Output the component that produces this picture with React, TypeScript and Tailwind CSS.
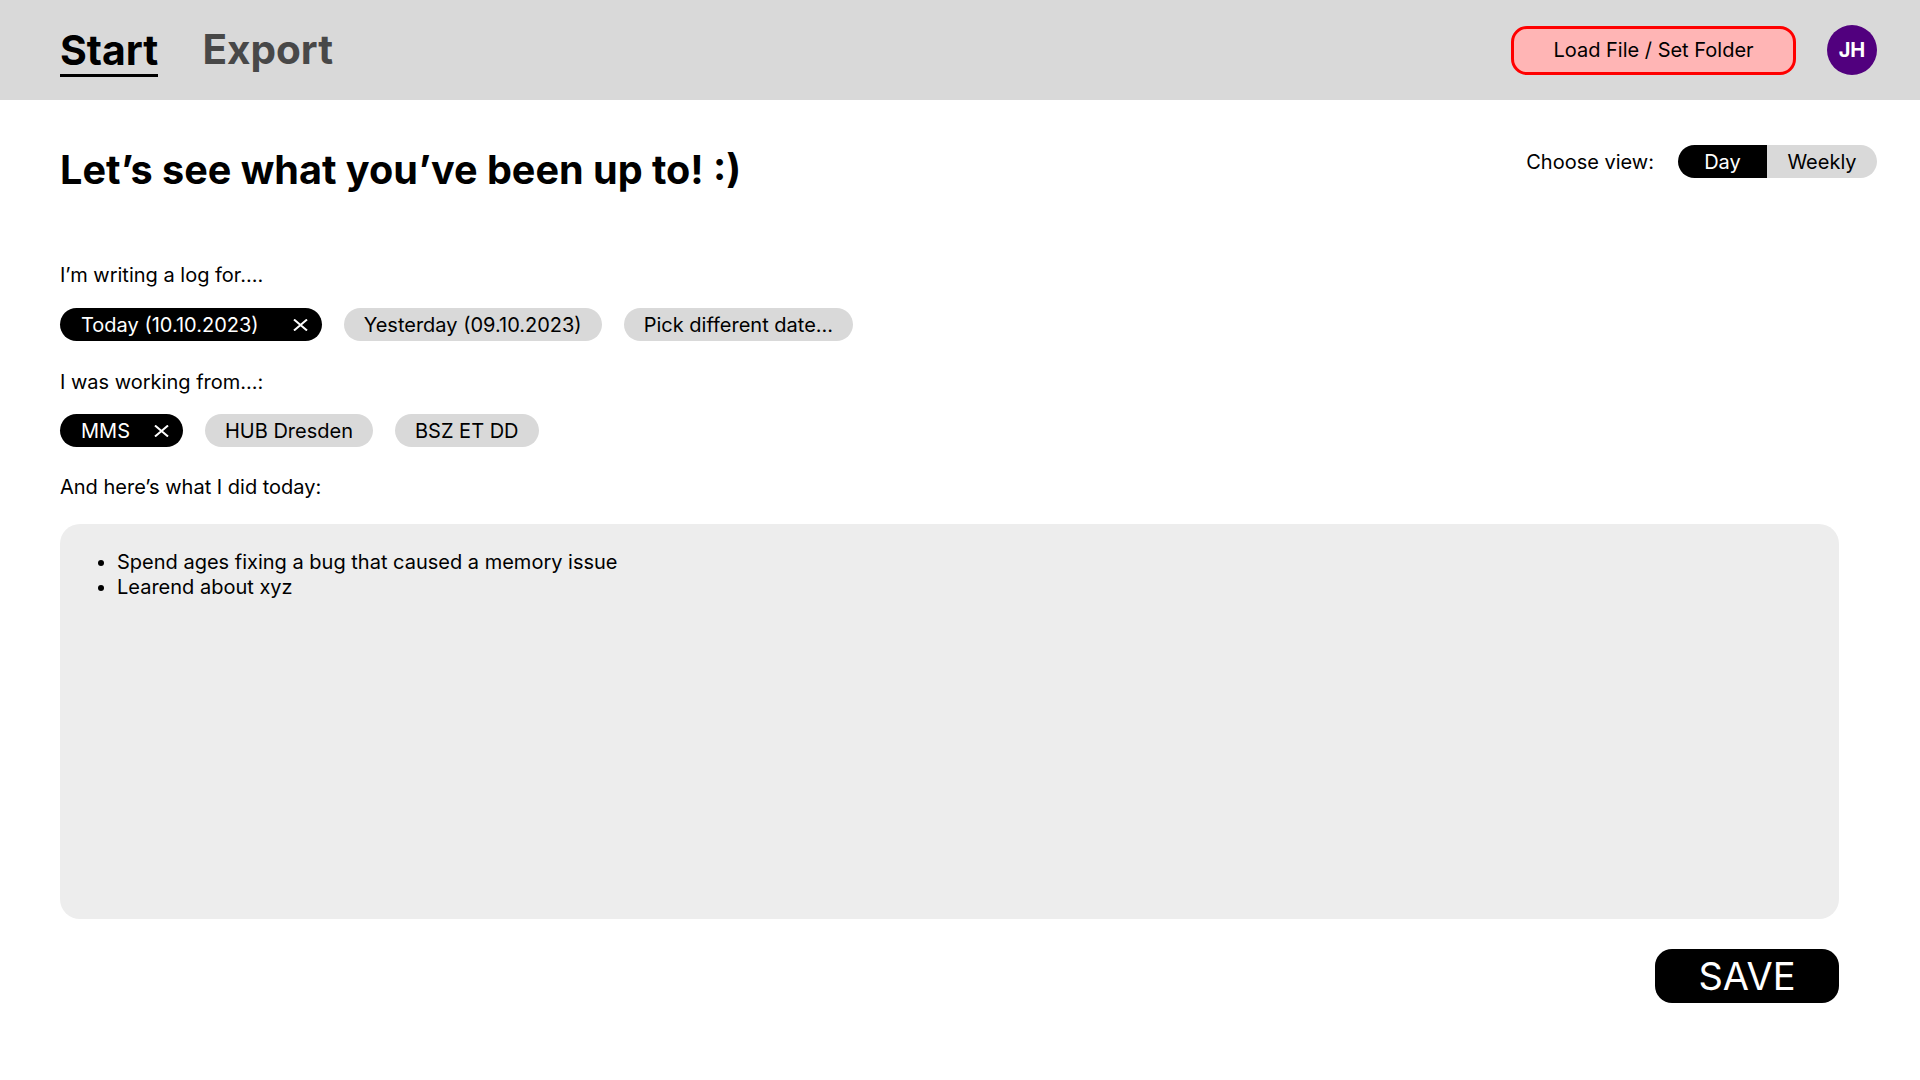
import { useState } from 'react';

// Small thin "x" used inside the selected chips
function CloseMark({ className = '' }: { className?: string }) {
  return (
    <svg width="15" height="12" viewBox="0 0 15 12" className={className} aria-hidden="true">
      <path d="M1 0.5 L14 11.5 M14 0.5 L1 11.5" stroke="currentColor" strokeWidth="2" fill="none" />
    </svg>
  );
}

type ChipProps = {
  label: string;
  selected?: boolean;
  gapClass?: string;
};

function Chip({ label, selected = false, gapClass = 'ml-[35px]' }: ChipProps) {
  if (selected) {
    return (
      <button className="flex h-[33px] items-center rounded-full bg-black pl-[21px] pr-[14px] text-[20px] leading-[24px] text-white">
        <span>{label}</span>
        <CloseMark className={gapClass} />
      </button>
    );
  }
  return (
    <button className="flex h-[33px] items-center rounded-full bg-[#d9d9d9] px-[20px] text-[20px] leading-[24px] text-black">
      {label}
    </button>
  );
}

export default function App() {
  const [view, setView] = useState<'day' | 'weekly'>('day');

  return (
    <div className="min-h-screen bg-white font-['Inter',sans-serif] text-black">
      {/* Top bar */}
      <header className="flex h-[100px] items-center justify-between bg-[#d9d9d9] pl-[60px] pr-[43px]">
        <nav className="flex gap-[44px] self-start pt-[31px]">
          <div className="flex flex-col">
            <span className="text-[41px] font-bold leading-[38px]">Start</span>
            <div className="mt-[5px] h-[3px] bg-black" />
          </div>
          <span className="text-[40.5px] font-bold leading-[38px] text-[#484848]">Export</span>
        </nav>

        <div className="flex items-center gap-[31px]">
          <button className="flex h-[49px] w-[285px] items-center justify-center rounded-[16px] border-[3px] border-[#ff0000] bg-[#ffb5b5] text-[20px] text-black">
            Load File / Set Folder
          </button>
          <div className="flex h-[50px] w-[50px] items-center justify-center rounded-full bg-[#51007e] text-[20px] font-bold text-white">
            JH
          </div>
        </div>
      </header>

      <main className="pl-[60px] pr-[43px]">
        {/* Heading + view switch */}
        <div className="mt-[45px] flex items-start justify-between">
          <h1 className="mt-[2px] text-[39.6px] font-bold leading-[46px]">Let’s see what you’ve been up to! :)</h1>
          <div className="flex h-[33px] items-center gap-[24px]">
            <span className="text-[20px]">Choose view:</span>
            <div className="flex h-[33px] overflow-hidden rounded-full text-[20px]">
              <button
                onClick={() => setView('day')}
                className={
                  view === 'day'
                    ? 'w-[89px] bg-black text-white'
                    : 'w-[89px] bg-[#d9d9d9] text-black'
                }
              >
                Day
              </button>
              <button
                onClick={() => setView('weekly')}
                className={
                  view === 'weekly'
                    ? 'w-[110px] bg-black text-white'
                    : 'w-[110px] bg-[#d9d9d9] text-black'
                }
              >
                Weekly
              </button>
            </div>
          </div>
        </div>

        <p className="mt-[70px] text-[20px] leading-[24px]">I’m writing a log for....</p>
        <div className="mt-[21px] flex gap-[22px]">
          <Chip label="Today (10.10.2023)" selected gapClass="ml-[34px]" />
          <Chip label="Yesterday (09.10.2023)" />
          <Chip label="Pick different date..." />
        </div>

        <p className="mt-[29px] text-[20px] leading-[24px]">I was working from...:</p>
        <div className="mt-[20px] flex gap-[22px]">
          <Chip label="MMS" selected gapClass="ml-[24px]" />
          <Chip label="HUB Dresden" />
          <Chip label="BSZ ET DD" />
        </div>

        <p className="mt-[28px] text-[20px] leading-[24px]">And here’s what I did today:</p>

        <div className="mr-[38px]">
          <div className="mt-[25px] h-[395px] rounded-[20px] bg-[#ededed] pl-[30px] pt-[26px]">
            <ul className="list-disc pl-[27px] text-[20px] leading-[25px]">
              <li>Spend ages fixing a bug that caused a memory issue</li>
              <li>Learend about xyz</li>
            </ul>
          </div>

          <div className="mt-[30px] flex justify-end">
            <button className="flex h-[54px] w-[184px] items-center justify-center rounded-[17px] bg-black text-[38px] leading-none text-white">
              SAVE
            </button>
          </div>
        </div>
      </main>
    </div>
  );
}
